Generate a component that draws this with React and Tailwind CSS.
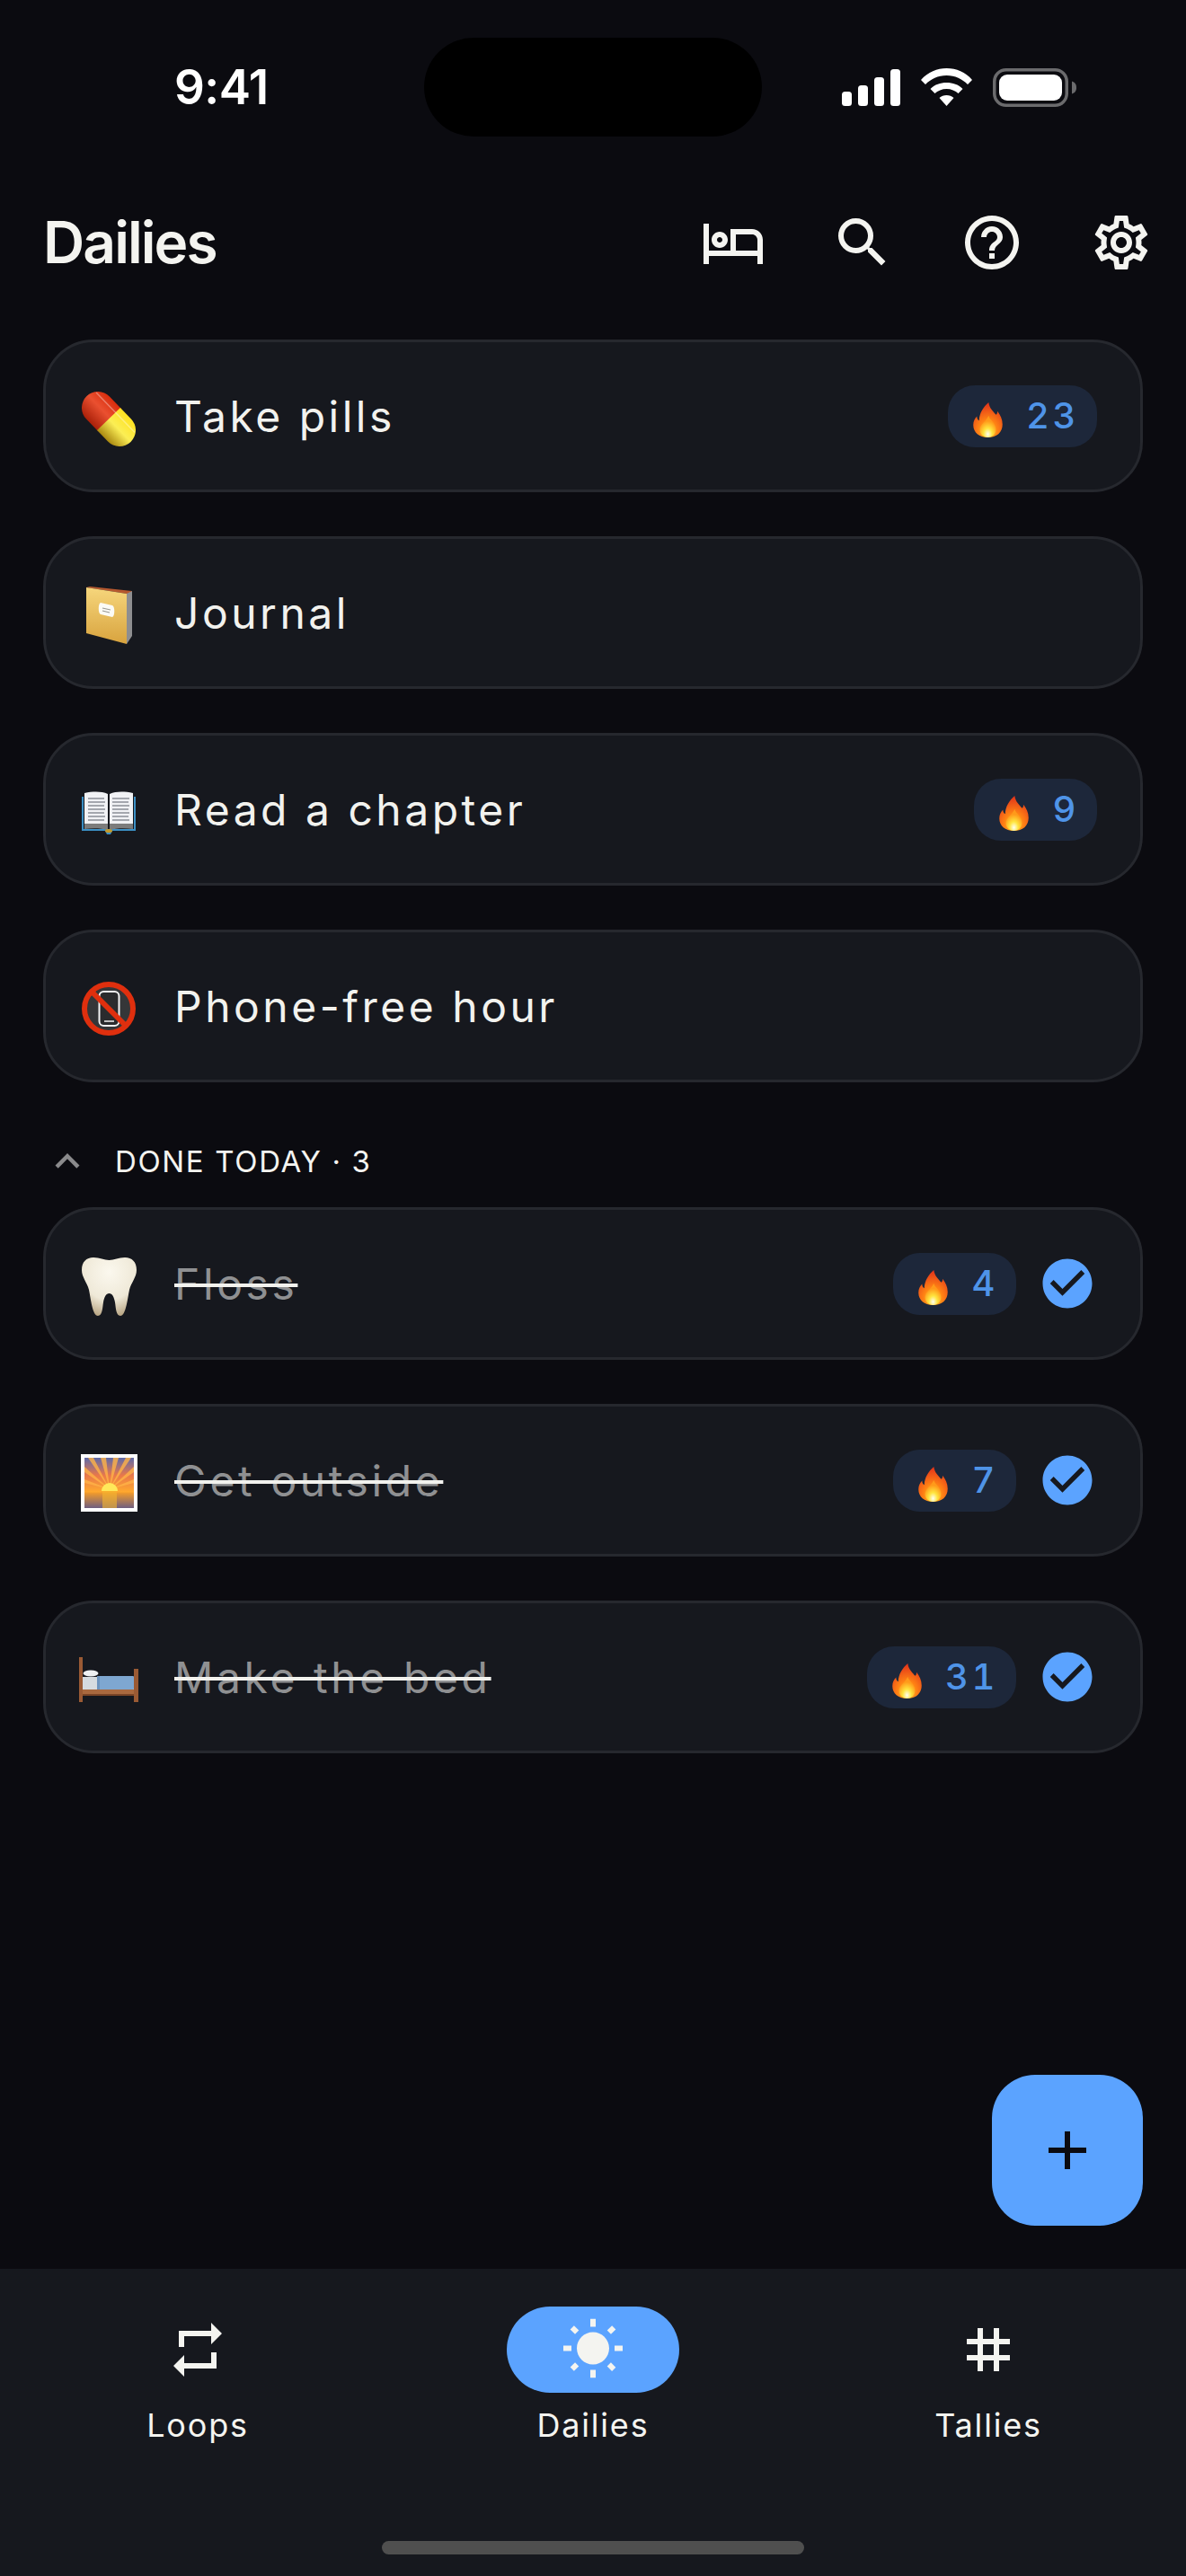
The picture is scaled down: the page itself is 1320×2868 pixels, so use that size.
import React from 'react';
import {
  MdAdd,
  MdCheckCircle,
  MdExpandLess,
  MdHelpOutline,
  MdOutlineHotel,
  MdOutlineSettings,
  MdRepeat,
  MdSearch,
  MdTag,
  MdWbSunny,
} from 'react-icons/md';

const Fire = () => (
  <svg viewBox="0 0 40 48" className="w-[33px] h-[39px] mt-[8px] shrink-0">
    <defs>
      <radialGradient id="fireOuter" cx="50%" cy="82%" r="80%">
        <stop offset="0%" stopColor="#ffd23a" />
        <stop offset="40%" stopColor="#ff8414" />
        <stop offset="100%" stopColor="#e2321a" />
      </radialGradient>
      <radialGradient id="fireInner" cx="50%" cy="85%" r="60%">
        <stop offset="0%" stopColor="#fffef0" />
        <stop offset="45%" stopColor="#ffe53f" />
        <stop offset="100%" stopColor="#ff9a1a" />
      </radialGradient>
    </defs>
    <path d="M21 0c1 8 6 12 10 17 2-1 2-3 2-5 4 5 7 11 7 18 0 11-8 18-20 18S0 41 0 31c0-5 2-9 5-12 0 3 1 5 3 6C8 15 14 6 21 0z" fill="url(#fireOuter)" />
    <path d="M21 18c1 6 10 10 10 19 0 7-5 11-11 11S9 44 9 37c0-7 9-11 12-19z" fill="url(#fireInner)" />
  </svg>
);

const Pill = () => (
  <svg viewBox="0 0 60 61" className="w-[60px] h-[61px]">
    <defs>
      <linearGradient id="pillRed" x1="0" y1="12" x2="0" y2="49" gradientUnits="userSpaceOnUse">
        <stop offset="0%" stopColor="#d92c0c" />
        <stop offset="45%" stopColor="#ea5030" />
        <stop offset="100%" stopColor="#a81f08" />
      </linearGradient>
      <linearGradient id="pillYel" x1="0" y1="12" x2="0" y2="49" gradientUnits="userSpaceOnUse">
        <stop offset="0%" stopColor="#ffe21f" />
        <stop offset="50%" stopColor="#fbee55" />
        <stop offset="100%" stopColor="#a8860f" />
      </linearGradient>
    </defs>
    <g transform="rotate(46 30 30.500)">
      <path d="M32 12.500H12.700a18 18 0 0 0 0 36H32z" fill="url(#pillRed)" />
      <path d="M30 12.500H47.300a18 18 0 0 1 0 36H30z" fill="url(#pillYel)" />
      <path d="M-1 20h62" stroke="#fff" strokeOpacity=".35" strokeWidth="1.500" />
    </g>
  </svg>
);

const Notebook = () => (
  <svg viewBox="0 0 51 64" className="w-[51px] h-[64px]">
    <defs>
      <linearGradient id="nbCover" x1="0" y1="0" x2="0" y2="1">
        <stop offset="0%" stopColor="#f6d67c" />
        <stop offset="100%" stopColor="#d8a33e" />
      </linearGradient>
    </defs>
    <path d="M45 6l6-1v50l-6 9z" fill="#8e8e90" />
    <path d="M0 1l4-1 47 5-6 3z" fill="#b5582f" />
    <path d="M0 1l45 7v56L0 52z" fill="url(#nbCover)" />
    <path d="M16 18l13 3c3 1 3 12 0 13l-13-3c-3-1-3-12 0-13z" fill="#fbfbf6" />
    <path d="M18 24l9 2M18 27l8 2" stroke="#9a9a94" strokeWidth="1.200" />
  </svg>
);

const OpenBook = () => (
  <svg viewBox="0 0 60 50" className="w-[60px] h-[50px]">
    <path d="M0 46V8h2v36h56V8h2v38H34l-2 4h-4l-2-4z" fill="#3b8fc4" />
    <path d="M3 4c10-2 19-2 26 1v36H3z" fill="#f1f2f5" />
    <path d="M57 4c-10-2-19-2-26 1v36h26z" fill="#f1f2f5" />
    <path d="M3 38h26v7c-8-2-17-2-26-1zM57 38H31v7c8-2 17-2 26-1z" fill="#7c7c7c" />
    <path d="M7 10h18M7 14h19M7 18h18M7 22h19M7 26h18M7 30h19M7 34h18M34 10h19M34 14h18M34 18h19M34 22h18M34 26h19M34 30h18M34 34h19" stroke="#8b8f96" strokeWidth="1.300" />
    <ellipse cx="30" cy="46" rx="4" ry="2" fill="#c29a2c" />
  </svg>
);

const NoPhone = () => (
  <svg viewBox="0 0 60 60" className="w-[60px] h-[60px]">
    <circle cx="30" cy="30" r="27" fill="#353638" />
    <rect x="19.500" y="11" width="22" height="38" rx="5" fill="#2a2b2d" stroke="#f4f4f4" strokeWidth="2" />
    <path d="M25 44h11" stroke="#f4f4f4" strokeWidth="1.500" />
    <circle cx="30" cy="30" r="27" fill="none" stroke="#df2f0e" strokeWidth="6" />
    <path d="M11 11l38 38" stroke="#df2f0e" strokeWidth="6" />
  </svg>
);

const Tooth = () => (
  <svg viewBox="0 0 61 65" className="w-[61px] h-[65px]">
    <defs>
      <radialGradient id="toothFill" cx="50%" cy="25%" r="80%">
        <stop offset="0%" stopColor="#fbf8ee" />
        <stop offset="60%" stopColor="#efe9d8" />
        <stop offset="100%" stopColor="#b39f7c" />
      </radialGradient>
    </defs>
    <path d="M13 0C20 0 25 3 30.500 3C36 3 41 0 48 0C56 0 61 5 61 14C61 22 55 28 53 36C51 46 49 65 43 65C38 65 38 56 37 50C36 44 34 40 30.500 40C27 40 25 44 24 50C23 56 23 65 18 65C12 65 10 46 8 36C6 28 0 22 0 14C0 5 5 0 13 0Z" fill="url(#toothFill)" />
  </svg>
);

const Sunrise = () => (
  <svg viewBox="0 0 63 64" className="w-[63px] h-[64px]">
    <defs>
      <linearGradient id="sky" x1="0" y1="0" x2="0" y2="1">
        <stop offset="0%" stopColor="#5f6aa8" />
        <stop offset="35%" stopColor="#e9784a" />
        <stop offset="68%" stopColor="#ffa92e" />
        <stop offset="70%" stopColor="#f09a2c" />
        <stop offset="100%" stopColor="#6f5f80" />
      </linearGradient>
    </defs>
    <rect width="63" height="64" fill="#fff" />
    <rect x="4" y="4" width="55" height="56" fill="url(#sky)" />
    <path d="M32 39L8 4h6zM32 39L22 4h6zM32 39L36 4h6zM32 39L50 4h6zM32 39L4 14v6zM32 39L59 14v6zM32 39L4 28v4zM32 39L59 28v4z" fill="#ffb347" opacity=".8" />
    <path d="M23 41a9 9 0 0 1 18 0z" fill="#ffe85a" />
    <rect x="24" y="41" width="16" height="19" fill="#f5b52e" opacity=".6" />
  </svg>
);

const BedEmoji = () => (
  <svg viewBox="0 0 66 50" className="w-[66px] h-[50px]">
    <rect x="4" y="22" width="57" height="14" fill="#d5dbe0" />
    <rect x="20" y="21" width="41" height="15" rx="1" fill="#7ea7d1" />
    <rect x="20" y="21" width="3" height="15" fill="#6b93bf" />
    <ellipse cx="13" cy="18" rx="8.500" ry="3.500" fill="#eef0f2" />
    <rect x="4" y="36" width="57" height="7" fill="#a9693f" />
    <rect x="4" y="41" width="57" height="2" fill="#7a4527" />
    <rect x="0" y="0" width="4" height="50" fill="#9a5a34" />
    <rect x="61" y="13" width="5" height="37" fill="#9a5a34" />
  </svg>
);

const Badge = ({ value }) => (
  <div className="flex items-center h-[69px] rounded-[30px] bg-[#1d273a] pl-[28px] pr-[20px]">
    <Fire />
    <span className="ml-[26px] text-[40px] leading-none tracking-[3.6px] text-[#4f94e8] font-medium tabular-nums">{value}</span>
  </div>
);

const HabitCard = ({ icon, name, streak, done }) => (
  <div className="h-[170px] rounded-[56px] border-[3px] border-[#26282e] bg-[#16181e] flex items-center pl-[34px] pr-[48px]">
    <div className="w-[72px] mt-[6px] flex items-center justify-center">{icon}</div>
    <span
      className={
        done
          ? 'ml-[37px] pt-[2px] text-[48px] tracking-[3.6px] text-[#8f9092] line-through decoration-[#f2f2ee] decoration-[4px]'
          : 'ml-[37px] pt-[2px] text-[48px] tracking-[3.5px] text-[#f2f2ee]'
      }
    >
      {name}
    </span>
    <div className="ml-auto flex items-center">
      {streak ? <Badge value={streak} /> : null}
      {done ? <MdCheckCircle className="ml-[24px] w-[66px] h-[66px] text-[#5ba3ff]" /> : null}
    </div>
  </div>
);

const StatusBar = () => (
  <div className="relative h-[194px] flex items-center justify-between pl-[194px] pr-[122px]">
    <span className="text-[53px] leading-none font-semibold tracking-[-0.01em] text-white">9:41</span>
    <div className="absolute left-[472px] top-[42px] w-[376px] h-[110px] rounded-[55px] bg-black" />
    <div className="flex items-center gap-[23px]">
      <svg viewBox="0 0 65 41" className="w-[65px] h-[41px]" fill="#fff">
        <rect x="0" y="25" width="11" height="16" rx="3.500" />
        <rect x="18" y="18" width="11" height="23" rx="3.500" />
        <rect x="36" y="9" width="11" height="32" rx="3.500" />
        <rect x="54" y="0" width="11" height="41" rx="3.500" />
      </svg>
      <svg viewBox="0 0 57 42" className="w-[57px] h-[42px]" fill="#fff">
        <path d="M28.500 0c11 0 21 4 28.500 13l-5 5C46 12 38 8 28.500 8S11 12 5 18l-5-5C8 4 18 0 28.500 0z" />
        <path d="M28.500 16c7 0 13 2 18 7l-5 5c-3-3-8-5-13-5s-10 2-13 5l-5-5c5-5 11-7 18-7z" />
        <path d="M28.500 30c3 0 6 1 8 3l-8 9-8-9c2-2 5-3 8-3z" />
      </svg>
      <svg viewBox="0 0 93 43" className="w-[93px] h-[43px]">
        <rect x="1.750" y="1.750" width="80.500" height="39.500" rx="13" fill="none" stroke="#6b6b6d" strokeWidth="3.500" />
        <rect x="7" y="7" width="70" height="29" rx="9" fill="#fff" />
        <path d="M88 14.500c3 1 5 3 5 7s-2 6-5 7z" fill="#6b6b6d" />
      </svg>
    </div>
  </div>
);

const HeaderButton = ({ children }) => (
  <div className="w-[144px] h-[120px] flex items-center justify-center">{children}</div>
);

const Header = () => (
  <div className="flex items-center justify-between h-[120px] mt-[16px] pl-[48px] text-[#f4f4f0]">
    <h1 className="text-[64px] font-semibold leading-none tracking-[-0.03em]">Dailies</h1>
    <div className="flex items-center">
      <HeaderButton><MdOutlineHotel className="w-[72px] h-[72px]" /></HeaderButton>
      <HeaderButton><MdSearch className="w-[72px] h-[72px]" /></HeaderButton>
      <HeaderButton><MdHelpOutline className="w-[72px] h-[72px]" /></HeaderButton>
      <HeaderButton><MdOutlineSettings className="w-[72px] h-[72px]" /></HeaderButton>
    </div>
  </div>
);

const NavItem = ({ label, active, children }) => (
  <div className="flex flex-col items-center text-[#f4f4f0]">
    <div className={active ? 'w-[192px] h-[96px] rounded-full bg-[#5ba3ff] flex items-center justify-center' : 'w-[192px] h-[96px] flex items-center justify-center'}>
      {children}
    </div>
    <span className="mt-[14px] text-[36px] leading-[44px] tracking-[0.05em]">{label}</span>
  </div>
);

export default function App() {
  return (
    <div className="relative w-[1320px] h-[2868px] overflow-hidden bg-[#0b0b10] flex flex-col font-['Inter',sans-serif]">
      <StatusBar />
      <Header />
      <div className="mt-[48px] px-[48px] flex flex-col gap-[49px]">
        <HabitCard icon={<Pill />} name="Take pills" streak="23" />
        <HabitCard icon={<Notebook />} name="Journal" />
        <HabitCard icon={<OpenBook />} name="Read a chapter" streak="9" />
        <HabitCard icon={<NoPhone />} name="Phone-free hour" />
      </div>
      <div className="mt-[72px] mb-[35px] pl-[48px] flex items-center h-[32px]">
        <MdExpandLess className="w-[54px] h-[54px] text-[#8a8a8c] shrink-0" />
        <span className="ml-[26px] text-[33px] leading-none tracking-[0.05em] text-[#f4f4f0]">DONE TODAY · 3</span>
      </div>
      <div className="px-[48px] flex flex-col gap-[49px]">
        <HabitCard icon={<Tooth />} name="Floss" streak="4" done />
        <HabitCard icon={<Sunrise />} name="Get outside" streak="7" done />
        <HabitCard icon={<BedEmoji />} name="Make the bed" streak="31" done />
      </div>

      {/* add button */}
      <div className="absolute right-[48px] bottom-[390px] w-[168px] h-[168px] rounded-[48px] bg-[#5ba3ff] flex items-center justify-center">
        <MdAdd className="w-[72px] h-[72px] text-[#0b0b10]" />
      </div>

      <div className="mt-auto h-[342px] bg-[#16181e] relative pt-[42px] grid grid-cols-3">
        <NavItem label="Loops"><MdRepeat className="w-[72px] h-[72px]" /></NavItem>
        <NavItem label="Dailies" active><MdWbSunny className="w-[72px] h-[72px]" /></NavItem>
        <NavItem label="Tallies"><MdTag className="w-[72px] h-[72px]" /></NavItem>
        <div className="absolute left-[425px] bottom-[24px] w-[470px] h-[15px] rounded-full bg-[#4f4f4f]" />
      </div>
    </div>
  );
}
